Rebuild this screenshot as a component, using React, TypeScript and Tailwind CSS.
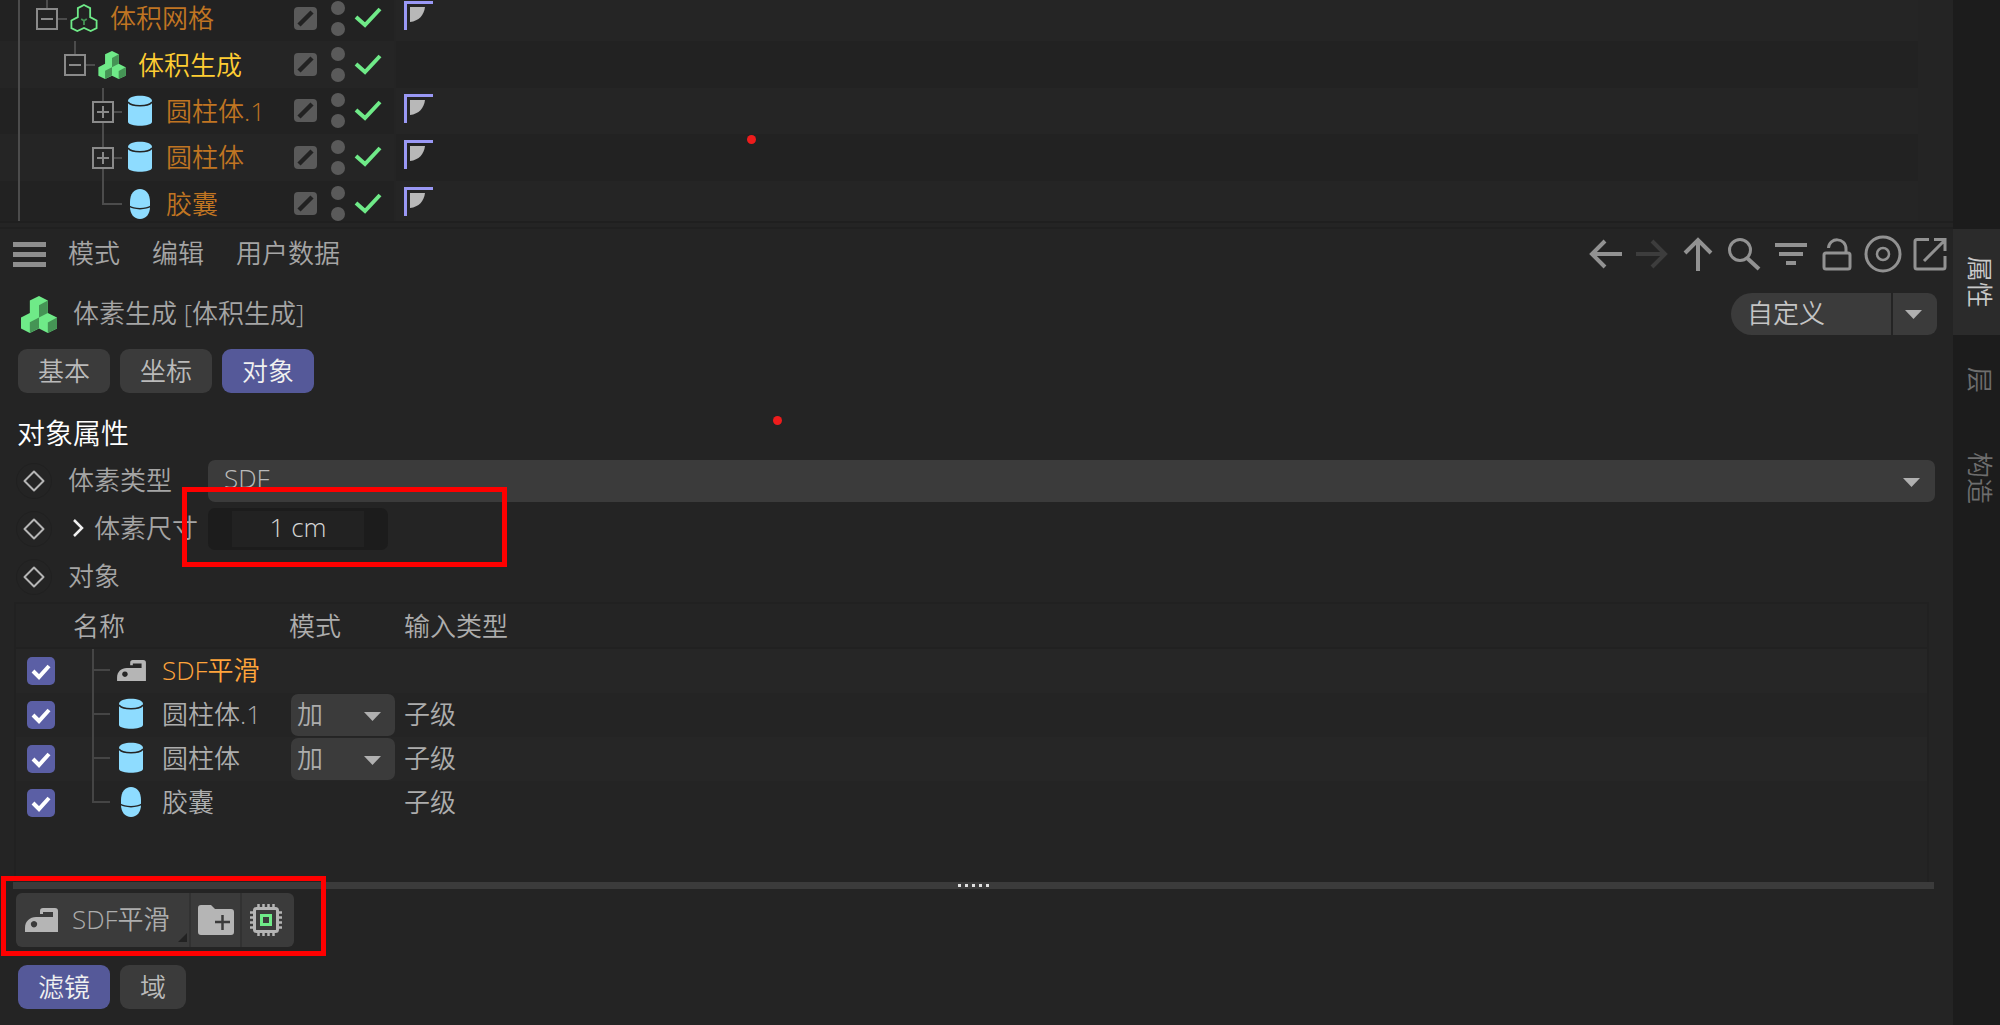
import { useState } from "react";
import type { ReactNode } from "react";
import clsx from "clsx";

type Shape = "mesh" | "cubes" | "cylinder" | "capsule" | "iron";

const treeRows: {
  name: string;
  shape: Shape;
  node: "minus" | "plus" | "leaf";
  below: boolean;
  indent: string;
  color: string;
  tag: boolean;
}[] = [
  { name: "体积网格", shape: "mesh", node: "minus", below: false, indent: "pl-[36px]", color: "text-[#c07522]", tag: true },
  { name: "体积生成", shape: "cubes", node: "minus", below: false, indent: "pl-[64px]", color: "text-[#ffce33]", tag: false },
  { name: "圆柱体.1", shape: "cylinder", node: "plus", below: true, indent: "pl-[92px]", color: "text-[#c07522]", tag: true },
  { name: "圆柱体", shape: "cylinder", node: "plus", below: true, indent: "pl-[92px]", color: "text-[#c07522]", tag: true },
  { name: "胶囊", shape: "capsule", node: "leaf", below: false, indent: "pl-[92px]", color: "text-[#c07522]", tag: true },
];

const objectRows: { name: string; shape: Shape; mode?: string; input?: string }[] = [
  { name: "SDF平滑", shape: "iron" },
  { name: "圆柱体.1", shape: "cylinder", mode: "加", input: "子级" },
  { name: "圆柱体", shape: "cylinder", mode: "加", input: "子级" },
  { name: "胶囊", shape: "capsule", input: "子级" },
];

const sideTabs = ["属性", "层", "构造"];

const Cubes = ({ className }: { className: string }) => (
  <svg viewBox="0 0 106 109" className={className}>
    <path d="M53 0 79 13V50L106 63V96L79 109 53 96 26 109 0 96V63L26 50V13Z" fill="#6fea88" />
    <path d="M53 27 79 13V50L53 63ZM26 77 53 63V95L26 109ZM79 78 106 63V96L79 109Z" fill="#459455" />
  </svg>
);

const Iron = ({ className }: { className: string }) => (
  <svg viewBox="0 0 33 24" className={className}>
    <path
      fillRule="evenodd"
      fill="currentColor"
      d="M0 24v-4C0 13 5 9 11 9h17V4H18v2h-3V3c0-2 1-3 3-3h12c2 0 3 1 3 3v21ZM9 13a3.2 3.2 0 1 0 .01 0Z"
    />
  </svg>
);

const ShapeIcon = ({ shape }: { shape: Shape }) => {
  if (shape === "mesh") {
    return (
      <svg viewBox="0 0 106 109" className="w-7 h-7 overflow-visible">
        <path
          d="M53 4 77 16V51L102 64V94L79 105 53 93 27 105 4 94V64L29 51V16Z"
          fill="none"
          stroke="#6fea88"
          strokeWidth="7"
        />
        <path d="M53 82V65M42 58 53 65 64 58" fill="none" stroke="#459455" strokeWidth="7" />
      </svg>
    );
  }
  if (shape === "cubes") return <Cubes className="w-7 h-7" />;
  if (shape === "iron") return <Iron className="w-[29px] h-[21px] text-[#b5b5b5]" />;
  if (shape === "capsule") {
    return (
      <svg viewBox="0 0 24 32" className="w-6 h-8">
        <path d="M2 14C2 6 6 1 12 1s10 5 10 13v5c0 7-4 12-10 12S2 26 2 19Z" fill="#8edcff" />
        <path d="M1 18c5 3.500 17 3.500 22 0" fill="none" stroke="#242424" strokeWidth="1.500" />
      </svg>
    );
  }
  return (
    <svg viewBox="0 0 24 32" className="w-6 h-8">
      <path d="M0 6C0 -1 24 -1 24 6V27C23 32 1 32 0 27Z" fill="#8edcff" />
      <path d="M0 7C3 12 21 12 24 7" fill="none" stroke="#242424" strokeWidth="1.500" />
    </svg>
  );
};

/* Branch lines and expander box in front of a tree item */
const Branch = ({ node, below }: { node: "minus" | "plus" | "leaf"; below: boolean }) => (
  <svg viewBox="0 0 34 47" className="w-[34px] h-[47px] shrink-0 overflow-visible" fill="none" strokeWidth="2">
    {node === "leaf" ? (
      <path d="M11 0V24H30" stroke="#4c4c4c" />
    ) : (
      <>
        <path d={below ? "M11 0V14M11 34V47M22 24H30" : "M11 0V14M22 24H31"} stroke="#4c4c4c" />
        <rect x="1" y="14" width="20" height="20" stroke="#8a8a8a" />
        <path d={node === "plus" ? "M5 24H17M11 18V30" : "M5 24H17"} stroke="#8a8a8a" />
      </>
    )}
  </svg>
);

const PhongTag = () => (
  <svg viewBox="0 0 29 29" className="w-[29px] h-[29px]">
    <path d="M1.500 29V1.500H29" fill="none" stroke="#9a98f5" strokeWidth="3" />
    <path d="M6 6H21C20 14 15 20 6 21Z" fill="#b8b8b8" />
  </svg>
);

const Caret = ({ className }: { className?: string }) => (
  <svg viewBox="0 0 17 9" className={clsx("w-[17px] h-[9px] pointer-events-none", className)}>
    <path d="M0 0H17L8.500 9Z" fill="#b0b0b0" />
  </svg>
);

const KeyDiamond = () => (
  <span className="w-9 h-9 rounded-full border border-[#202020] flex items-center justify-center">
    <svg viewBox="0 0 22 22" className="w-[22px] h-[22px]">
      <path d="M11 1.500 20.500 11 11 20.500 1.500 11Z" fill="none" stroke="#b5b5b5" strokeWidth="2" strokeLinejoin="round" />
    </svg>
  </span>
);

const navIcons: { label: string; dim?: boolean; art: ReactNode }[] = [
  { label: "后退", art: <path d="M35 18H5M18 5 5 18 18 31" strokeWidth="4" /> },
  { label: "前进", dim: true, art: <path d="M2 18H32M18 5 31 18 18 31" strokeWidth="4" /> },
  { label: "向上", art: <path d="M18 35V5M5 17 18 4 31 17" strokeWidth="4" /> },
  {
    label: "搜索",
    art: (
      <>
        <circle cx="14" cy="14" r="10.500" strokeWidth="3" />
        <path d="M21 22 33 33" strokeWidth="4" />
      </>
    ),
  },
  { label: "过滤", art: <path d="M2 9H34M6 18H30M13 27H23" strokeWidth="4" /> },
  {
    label: "锁定",
    art: (
      <path d="M7 17H29Q31 17 31 19V31Q31 33 29 33H7Q5 33 5 31V19Q5 17 7 17ZM9.500 12C10 1 27 1 27 13V17" strokeWidth="3" />
    ),
  },
  {
    label: "目标",
    art: (
      <>
        <circle cx="18" cy="18" r="17" strokeWidth="3" />
        <circle cx="18" cy="18" r="6" strokeWidth="2.500" />
      </>
    ),
  },
  { label: "新窗口", art: <path d="M17 3.500H5Q3 3.500 3 5.500V31Q3 33 5 33H31Q33 33 33 31V20M22 3.500H33V15M33 4 12 25" strokeWidth="3" /> },
];

const ObjectTree = () => (
  <section className="relative h-[223px] overflow-hidden border-b-2 border-[#1f1f1f]">
    <div className="grid grid-rows-5 h-[232px] -mt-[5px] mr-[35px]">
      {treeRows.map((row, i) => (
        <div key={row.name} className="grid grid-cols-[394px_1fr] gap-0.5">
          <div className={clsx("flex items-center overflow-hidden", i % 2 ? "bg-[#252525]" : "bg-[#222222]")}>
            <div className={clsx("flex items-center w-[294px] shrink-0", row.indent)}>
              <Branch node={row.node} below={row.below} />
              <span className="w-7 flex justify-center shrink-0">
                <ShapeIcon shape={row.shape} />
              </span>
              <span className={clsx("pl-3 whitespace-nowrap", row.color)}>{row.name}</span>
            </div>
            <svg viewBox="0 0 23 23" className="w-[23px] h-[23px]">
              <rect width="23" height="23" rx="4" fill="#5a5a5a" />
              <path d="M5 18 18 5" stroke="#222222" strokeWidth="4.500" />
            </svg>
            <div className="flex flex-col gap-[7px] ml-[14px]">
              <span className="w-[14px] h-[14px] rounded-full bg-[#5a5a5a]" />
              <span className="w-[14px] h-[14px] rounded-full bg-[#5a5a5a]" />
            </div>
            <svg viewBox="0 0 28 22" className="w-7 h-[22px] ml-[9px]">
              <path d="M2 10 11 18 26 2" fill="none" stroke="#6fea88" strokeWidth="4" />
            </svg>
          </div>
          <div className={clsx("pl-2 pt-[6px]", i % 2 ? "bg-[#222222]" : "bg-[#252525]")}>{row.tag && <PhongTag />}</div>
        </div>
      ))}
    </div>
    {/* root guide line */}
    <div className="absolute left-[18px] top-0 w-0.5 h-full bg-[#4c4c4c]" />
  </section>
);

const MenuBar = () => (
  <nav className="flex items-center justify-between h-[50px]">
    <div className="flex items-center pl-[13px] text-[#a5a5a5]">
      <button aria-label="菜单" className="flex flex-col gap-[5px] w-[33px] mr-[22px]">
        <span className="h-[5px] bg-[#8e8e8e]" />
        <span className="h-[5px] bg-[#8e8e8e]" />
        <span className="h-[5px] bg-[#8e8e8e]" />
      </button>
      <div className="flex gap-8 pb-0.5">
        <button>模式</button>
        <button>编辑</button>
        <button>用户数据</button>
      </div>
    </div>
    <div className="grid grid-cols-8 w-[371px]">
      {navIcons.map((icon) => (
        <button key={icon.label} aria-label={icon.label} className="flex justify-center">
          <svg
            viewBox="0 0 36 36"
            fill="none"
            stroke="currentColor"
            className={clsx("w-9 h-9 overflow-visible", icon.dim ? "text-[#3d3d3d]" : "text-[#929292]")}
          >
            {icon.art}
          </svg>
        </button>
      ))}
    </div>
  </nav>
);

const TabButton = ({ label, active, onClick }: { label: string; active: boolean; onClick: () => void }) => (
  <button
    onClick={onClick}
    className={clsx(
      "h-11 px-5 rounded-[9px] flex items-center",
      active ? "bg-[#555999] text-[#f0f0f0]" : "bg-[#3b3b3b] text-[#bababa]"
    )}
  >
    {label}
  </button>
);

const ObjectTable = () => (
  <div className="ml-[14px] mr-6 h-[280px] border-x-2 border-t-2 border-[#212121]">
    <table className="w-full table-fixed text-left text-[#adadad]">
      <thead>
        <tr className="h-11 border-b-2 border-[#212121]">
          <th className="w-[57px]" aria-label="启用" />
          <th className="w-[216px] font-[350]">名称</th>
          <th className="w-[115px] font-[350]">模式</th>
          <th className="font-[350]">输入类型</th>
        </tr>
      </thead>
      <tbody>
        {objectRows.map((row, i) => (
          <tr key={row.name} className={clsx("h-11", i % 2 === 0 && "bg-[#262626]")}>
            <td className="p-0 align-middle">
              <span className="relative block w-7 h-7 ml-[11px]">
                <input
                  type="checkbox"
                  defaultChecked
                  aria-label={row.name}
                  className="peer appearance-none block w-7 h-7 rounded-[5px] bg-[#3b3b3b] checked:bg-[#5b5fa5]"
                />
                <svg viewBox="0 0 28 28" className="absolute inset-0 hidden peer-checked:block pointer-events-none">
                  <path d="M6 14 12 20 22 9" fill="none" stroke="#ffffff" strokeWidth="4" />
                </svg>
              </span>
            </td>
            <td className="p-0">
              <div className="flex items-center h-11 pl-[19px]">
                <svg viewBox="0 0 18 44" className="w-[18px] h-11" fill="none" stroke="#454545" strokeWidth="2">
                  <path d={i === objectRows.length - 1 ? "M1 0V21H18" : "M1 0V44M1 21H18"} />
                </svg>
                <span className="w-[42px] flex justify-center pb-0.5">
                  <ShapeIcon shape={row.shape} />
                </span>
                <span className={clsx("pl-[10px] pb-0.5", row.shape === "iron" && "text-[#ffa43b]")}>{row.name}</span>
              </div>
            </td>
            <td className="p-0">
              {row.mode && (
                <span className="relative flex items-center w-[104px] ml-[2px]">
                  <select aria-label={`${row.name} 模式`} className="appearance-none w-full h-[42px] rounded-[7px] bg-[#3b3b3b] pl-[6px] pb-0.5">
                    <option>{row.mode}</option>
                  </select>
                  <Caret className="absolute right-[14px] mt-0.5" />
                </span>
              )}
            </td>
            <td className="px-0 pt-0 pb-0.5">{row.input}</td>
          </tr>
        ))}
      </tbody>
    </table>
  </div>
);

const LayerToolbar = () => (
  <div className="flex items-stretch w-fit h-[54px] ml-4 rounded-md bg-[#3b3b3b] text-[#adadad]">
    <button className="relative flex items-center gap-[14px] pl-[9px] w-[175px] border-r-2 border-[#323232]">
      <Iron className="w-[33px] h-6 text-[#b5b5b5]" />
      <span className="pb-0.5">SDF平滑</span>
      <svg viewBox="0 0 9 9" className="absolute right-[2px] bottom-[5px] w-[9px] h-[9px]">
        <path d="M9 0V9H0Z" fill="#222222" />
      </svg>
    </button>
    <button aria-label="新建文件夹" className="flex items-center justify-center w-[51px] border-r-2 border-[#323232]">
      <svg viewBox="0 0 36 30" className="w-9 h-[30px]">
        <path d="M3 0H13L17 4H33Q36 4 36 7V27Q36 30 33 30H3Q0 30 0 27V3Q0 0 3 0Z" fill="#b5b5b5" />
        <path d="M17 17H32M24.500 10V25" stroke="#3b3b3b" strokeWidth="2.500" />
      </svg>
    </button>
    <button aria-label="缓存" className="flex items-center justify-center w-[52px] pr-1">
      <svg viewBox="0 0 32 32" className="w-8 h-8" fill="none">
        <rect x="4.500" y="4.500" width="23" height="23" rx="2" stroke="#b5b5b5" strokeWidth="3" />
        <path
          d="M8.500 0V3M13.500 0V3M18.500 0V3M23.500 0V3M8.500 29V32M13.500 29V32M18.500 29V32M23.500 29V32M0 8.500H3M0 13.500H3M0 18.500H3M0 23.500H3M29 8.500H32M29 13.500H32M29 18.500H32M29 23.500H32"
          stroke="#b5b5b5"
          strokeWidth="2.500"
        />
        <rect x="11.500" y="11.500" width="9" height="9" stroke="#6fea88" strokeWidth="3" />
      </svg>
    </button>
  </div>
);

const Attributes = () => {
  const [tab, setTab] = useState("对象");
  const [subTab, setSubTab] = useState("滤镜");

  return (
    <section className="mt-1 border-t-2 border-[#202020]">
      <MenuBar />

      <div className="flex items-center h-[70px] pl-[21px] pr-4">
        <Cubes className="w-9 h-[37px]" />
        <h1 className="flex-1 pl-4 pb-0.5 text-[#a5a5a5]">体素生成 [体积生成]</h1>
        <div className="relative flex items-center w-[206px]">
          <select aria-label="预设" className="appearance-none w-full h-[42px] pl-4 pb-0.5 rounded-l-[21px] rounded-r-[9px] bg-[#3b3b3b] text-[#c5c5c5]">
            <option>自定义</option>
          </select>
          <span className="absolute right-11 w-0.5 h-[42px] bg-[#242424]" />
          <Caret className="absolute right-[15px]" />
        </div>
      </div>

      <div className="flex gap-[10px] px-[18px]">
        {["基本", "坐标", "对象"].map((name) => (
          <TabButton key={name} label={name} active={tab === name} onClick={() => setTab(name)} />
        ))}
      </div>

      <h2 className="px-[17px] pt-5 text-[28px] leading-10 text-white">对象属性</h2>

      <div className="grid grid-cols-[52px_140px_1fr] auto-rows-[42px] gap-y-[6px] items-center pl-4 pr-[18px] pt-[7px] pb-1 text-[#a5a5a5]">
        <KeyDiamond />
        <label htmlFor="voxel-type" className="pb-0.5">
          体素类型
        </label>
        <div className="relative flex items-center">
          <select id="voxel-type" className="appearance-none w-full h-[42px] rounded-[7px] bg-[#3b3b3b] pl-4 pb-[6px] text-[#bababa]">
            <option>SDF</option>
          </select>
          <Caret className="absolute right-[15px] mt-0.5" />
        </div>

        <KeyDiamond />
        <label htmlFor="voxel-size" className="flex items-center pb-0.5 whitespace-nowrap">
          <svg viewBox="0 0 12 18" className="w-3 h-[18px] ml-1 mr-[10px] shrink-0">
            <path d="M2 1 10 9 2 17" fill="none" stroke="#f0f0f0" strokeWidth="2.500" />
          </svg>
          体素尺寸
        </label>
        <div className="flex justify-center items-center w-[180px] h-[42px] rounded-[7px] bg-[#1c1c1c]">
          <input id="voxel-size" defaultValue="1 cm" className="w-[132px] h-9 pb-1 bg-[#222222] text-center text-[#d6d6d6]" />
        </div>

        <KeyDiamond />
        <span className="pb-0.5">对象</span>
      </div>

      <ObjectTable />

      {/* splitter */}
      <div className="flex items-center justify-center gap-1 h-[7px] ml-[13px] mr-[19px] bg-[#3b3b3b]">
        {[0, 1, 2, 3, 4].map((n) => (
          <span key={n} className="w-[3px] h-[3px] bg-[#e0e0e0]" />
        ))}
      </div>

      <div className="pt-1">
        <LayerToolbar />
      </div>

      <div className="flex gap-[10px] px-[18px] pt-[18px]">
        {["滤镜", "域"].map((name) => (
          <TabButton key={name} label={name} active={subTab === name} onClick={() => setSubTab(name)} />
        ))}
      </div>
    </section>
  );
};

const App = () => {
  return (
    <div className="relative flex min-h-screen overflow-hidden bg-[#242424] font-['Open_Sans','Noto_Sans_CJK_SC',sans-serif] text-[26px] leading-8 font-[350]">
      <main className="flex-1 min-w-0">
        <ObjectTree />
        <Attributes />
      </main>

      <aside className="w-[47px] shrink-0 pt-[229px] bg-[#1c1c1c] flex flex-col gap-[5px]">
        {sideTabs.map((name, i) => (
          <button
            key={name}
            className={clsx(
              "w-full pt-[27px] pb-[27px] pl-[6px] flex justify-center",
              i === 0 ? "bg-[#2b2b2b] text-[#c8c8c8]" : "text-[#6e6e6e]"
            )}
          >
            <span className="[writing-mode:vertical-rl] [text-orientation:sideways]">{name}</span>
          </button>
        ))}
      </aside>

      {/* annotation marks */}
      <div className="absolute left-[182px] top-[487px] w-[325px] h-20 border-5 border-[#ff0000] pointer-events-none" />
      <div className="absolute left-px top-[876px] w-[325px] h-20 border-5 border-[#ff0000] pointer-events-none" />
      <div className="absolute left-[747px] top-[135px] w-[9px] h-[9px] rounded-full bg-[#ee1c1c]" />
      <div className="absolute left-[773px] top-[416px] w-[9px] h-[9px] rounded-full bg-[#ee1c1c]" />
    </div>
  );
};

export default App;
